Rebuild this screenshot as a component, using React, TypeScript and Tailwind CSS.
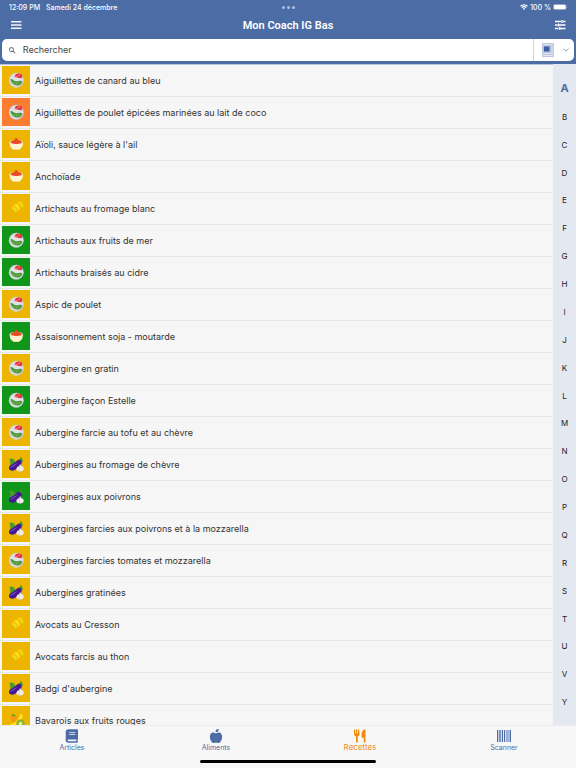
import { useState } from 'react';
import { FaAppleAlt } from 'react-icons/fa';
import { MdSearch } from 'react-icons/md';

type Kind = 'plate' | 'sauce' | 'gratin' | 'aubergine' | 'fruit';
type Level = 'yellow' | 'orange' | 'green';

interface Recipe {
  name: string;
  kind: Kind;
  level: Level;
}

const LEVEL_BG: Record<Level, string> = {
  yellow: 'bg-[#edb500]',
  orange: 'bg-[#fc7c30]',
  green: 'bg-[#109618]',
};

const RECIPES: Recipe[] = [
  { name: 'Aiguillettes de canard au bleu', kind: 'plate', level: 'yellow' },
  { name: 'Aiguillettes de poulet épicées marinées au lait de coco', kind: 'plate', level: 'orange' },
  { name: "Aïoli, sauce légère à l'ail", kind: 'sauce', level: 'yellow' },
  { name: 'Anchoïade', kind: 'sauce', level: 'yellow' },
  { name: 'Artichauts au fromage blanc', kind: 'gratin', level: 'yellow' },
  { name: 'Artichauts aux fruits de mer', kind: 'plate', level: 'green' },
  { name: 'Artichauts braisés au cidre', kind: 'plate', level: 'green' },
  { name: 'Aspic de poulet', kind: 'plate', level: 'yellow' },
  { name: 'Assaisonnement soja - moutarde', kind: 'sauce', level: 'green' },
  { name: 'Aubergine en gratin', kind: 'plate', level: 'yellow' },
  { name: 'Aubergine façon Estelle', kind: 'plate', level: 'green' },
  { name: 'Aubergine farcie au tofu et au chèvre', kind: 'plate', level: 'yellow' },
  { name: 'Aubergines au fromage de chèvre', kind: 'aubergine', level: 'yellow' },
  { name: 'Aubergines aux poivrons', kind: 'aubergine', level: 'green' },
  { name: 'Aubergines farcies aux poivrons et à la mozzarella', kind: 'aubergine', level: 'yellow' },
  { name: 'Aubergines farcies tomates et mozzarella', kind: 'plate', level: 'yellow' },
  { name: 'Aubergines gratinées', kind: 'aubergine', level: 'yellow' },
  { name: 'Avocats au Cresson', kind: 'gratin', level: 'yellow' },
  { name: 'Avocats farcis au thon', kind: 'gratin', level: 'yellow' },
  { name: "Badgi d'aubergine", kind: 'aubergine', level: 'yellow' },
  { name: 'Bavarois aux fruits rouges', kind: 'fruit', level: 'yellow' },
];

const LETTERS = 'ABCDEFGHIJKLMNOPQRSTUVY'.split('');

function KindIcon({ kind }: { kind: Kind }) {
  if (kind === 'plate') {
    return (
      <svg viewBox="0 0 28 28" className="size-7" aria-hidden="true">
        <circle cx="14.300" cy="14.200" r="7.500" fill="#cdd1d8" />
        <circle cx="14.300" cy="14.200" r="6.300" fill="#dfe2e8" />
        <path d="M12.600 10.300c.2-1.600 1.900-2.700 4-2.800 1.800 0 3.300.9 3.700 2.300.3 1.200-.3 2.300-1.400 2.400-1.300.2-2.200-.4-3.300-.5-1.200-.1-2.800-.2-3-1.400z" fill="#e0383c" />
        <path d="M11.700 11.300c1.300-.9 3-.6 4.200 0M16.500 9.300l1.500.1" stroke="#f4aaa4" strokeWidth=".8" fill="none" />
        <path d="M8.600 13.300c1.100-.7 2 .1 3.100 1 1.500 1.100 2.900 1.100 4.700.7 1.300-.3 3.200-.6 3.700.5.4 1.200-.6 2.600-2 3.400-2 1-4.500.9-6.500-.4-1.800-1.200-3.400-3.300-3-5.200z" fill="#4f9b3c" />
        <path d="M9.500 15.600c1.700 2 4.500 2.500 8.500 1.300" stroke="#8cc46c" strokeWidth=".8" fill="none" strokeDasharray="1.500 1" />
      </svg>
    );
  }
  if (kind === 'sauce') {
    return (
      <svg viewBox="0 0 28 28" className="size-7" aria-hidden="true">
        <path d="M7.700 12h13.200c.3 3.600-1 6.300-3.600 7.400l-.5.700h-5l-.5-.7C8.700 18.300 7.400 15.600 7.700 12z" fill="#fff3d0" />
        <path d="M11.300 19.200h6l-.5.900h-5z" fill="#e5d7a8" />
        <ellipse cx="14.300" cy="12.200" rx="6.600" ry="2.300" fill="#f8e8bf" />
        <path d="M8.600 12c.5-1.100 2-1.600 3.600-2.100 1.100-.4.700-1.900 1.900-2.100 1.300.2.900 1.700 2 2.100 1.600.4 3.300 1 3.900 2.100.1 2.600-11.400 2.600-11.400 0z" fill="#e94b27" />
      </svg>
    );
  }
  if (kind === 'gratin') {
    return (
      <svg viewBox="0 0 28 28" className="size-7" aria-hidden="true">
        <path d="M8 15l2.900-2.800c2.300.6 4 2.500 4.200 4.800l-2.300 2.800c-.4-2.500-2-4.400-4.800-4.800z" fill="#f9d70c" />
        <path d="M11.300 11.800l2.600-2.500c2.500.6 4.300 2.500 4.500 5l-2.500 2.900c-.5-2.700-2.100-4.600-4.600-5.400z" fill="#fbdd12" />
        <path d="M14.700 9l2-1.700c2.700.2 4.700 2.300 4.900 4.700l-2.600 2.900c-.4-2.800-1.900-4.900-4.300-5.900z" fill="#f7d409" />
        <path d="M8 15c2.600.3 4.300 1.900 4.900 4.700M14.800 9.100c2.300 1 3.700 3 4.200 5.600" stroke="#cc9d00" strokeWidth=".7" fill="none" />
      </svg>
    );
  }
  if (kind === 'aubergine') {
    return (
      <svg viewBox="0 0 28 28" className="size-7" aria-hidden="true">
        <path d="M7.500 9.200c1.900-1.300 3.900-.6 5 1l1.500 3-5.500 4.300C7.800 15 8.800 12 7.500 9.200z" fill="#4c9a2a" />
        <path d="M16.500 10c1-.5 1.700-1.600 2-2.700l1.500.6-.3 1.500 1.600.8c-.8 1.400-1.900 2.200-3.300 2.300z" fill="#39951f" />
        <path d="M15.800 10c1.800-.6 3.600.3 3.900 2.200.2 2.900-2.200 4.200-4.300 6-2.200 1.900-5.500 3.600-7.700 1.500-1.500-1.800-.5-4 1.500-4.800 3-1.300 4.300-3.500 6.600-4.900z" fill="#451790" />
        <path d="M9.200 17.200c1.700-1.300 3.400-1.500 4.900-3.500" stroke="#9468d2" strokeWidth=".9" fill="none" strokeLinecap="round" />
        <path d="M18.200 13.700l.8 2.300c1.900.4 2.900 1.500 2.700 3.100-.2 1.800-1.800 2.500-3.800 2.500s-3.500-.9-3.500-2.500c0-1.500 1.100-2.500 2.800-3.100z" fill="#f1ebf0" />
        <path d="M18 16.500c-1 1.500-1 3 0 4.700" stroke="#c5b7c5" strokeWidth=".6" fill="none" />
      </svg>
    );
  }
  return (
    <svg viewBox="0 0 28 28" className="size-7" aria-hidden="true">
      <circle cx="12" cy="12.500" r="3.500" fill="#f79a12" />
      <path d="M9.500 9.500l2-.9 1.500 1.400" stroke="#4b9b2e" strokeWidth="1.200" fill="none" />
      <path d="M18.500 7.500l1.500.7c1.500 4.500-1 8.500-5 10.500-3 1.500-6 1.300-7.500 0 5-1.500 9.500-5 11-11.200z" fill="#ffe21c" />
      <circle cx="18.500" cy="17.500" r="4.300" fill="#90b52b" />
      <circle cx="18.500" cy="17.500" r="1.700" fill="#e7edaa" />
    </svg>
  );
}

function StatusBar() {
  return (
    <div className="grid h-3.5 grid-cols-3 items-center pr-2 pl-[9px] font-['Inter',sans-serif] text-[7px] leading-none font-medium">
      <div className="flex gap-1.5">
        <span>12:09 PM</span>
        <span>Samedi 24 décembre</span>
      </div>
      <div className="flex justify-center gap-0.5">
        <span className="size-[3px] rounded-full bg-[#b0bede]" />
        <span className="size-[3px] rounded-full bg-[#b0bede]" />
        <span className="size-[3px] rounded-full bg-[#b0bede]" />
      </div>
      <div className="flex items-center justify-end gap-0.5">
        <svg viewBox="0 0 16 12" className="h-1.5 w-2" aria-hidden="true">
          <path d="M1 4.500a10 10 0 0 1 14 0M3.600 7.200a6.300 6.300 0 0 1 8.800 0" fill="none" stroke="#fff" strokeWidth="2.300" />
          <path d="M5.700 9.300a3.300 3.300 0 0 1 4.600 0L8 11.800z" fill="#fff" />
        </svg>
        <span>100 %</span>
        <svg viewBox="0 0 15 6" className="h-1.5 w-[15px]" aria-hidden="true">
          <rect x="0.300" y="0.300" width="12.900" height="5.400" rx="1.700" fill="none" stroke="#a9b8d8" strokeWidth=".5" />
          <rect x="0.800" y="0.700" width="11.900" height="4.600" rx="1.300" fill="#fff" />
          <path d="M13.700 2v2c.8-.3.800-1.700 0-2z" fill="#a9b8d8" />
        </svg>
      </div>
    </div>
  );
}

function TitleBar() {
  return (
    <div className="flex h-[25px] items-center justify-between px-2.5 pb-[3px]">
      <button type="button" aria-label="Menu">
        <svg viewBox="0 0 12 10" className="h-2.5 w-3" aria-hidden="true">
          <path d="M1 1.800h10.500M1 5h10.500M1 8.200h10.500" stroke="#f2f5fa" strokeWidth="1.400" />
        </svg>
      </button>
      <h1 className="pt-px font-['Roboto',sans-serif] text-[11px] leading-4 font-semibold">Mon Coach IG Bas</h1>
      <button type="button" aria-label="Filtres">
        <svg viewBox="0 0 12 12" className="size-3" aria-hidden="true">
          <path
            d="M1 2.500h6M9 2.500h2.500M1 6h2.500M5 6h6.500M1 9.500h3.500M6.500 9.500h5M8 1v3M4.500 4.500v3M5.800 8v3"
            stroke="#fff"
            strokeWidth="1.300"
          />
        </svg>
      </button>
    </div>
  );
}

function SearchBar({ value, onChange }: { value: string; onChange: (v: string) => void }) {
  return (
    <div className="px-0.5 pb-[3px]">
      <div className="flex h-[22px] overflow-hidden rounded-[5px] bg-white">
        <label className="flex flex-1 items-center gap-1.5 pl-1.5">
          <MdSearch className="size-[9px] text-[#444]" />
          <input
            type="text"
            aria-label="Rechercher"
            placeholder="Rechercher"
            value={value}
            onChange={(e) => onChange(e.target.value)}
            className="w-full bg-transparent font-['Inter',sans-serif] text-[9px] leading-4 text-[#333] outline-none placeholder:text-[#444]"
          />
        </label>
        <div className="relative flex w-[41px] items-center justify-between border-l border-[#c8d2e8] pr-[5px] pl-2">
          <svg viewBox="0 0 12 14" className="h-3.5 w-3" aria-hidden="true">
            <rect width="12" height="14" rx="1" fill="#b9c5df" />
            <path d="M1 1.500h10M1 10.500h10M1 12.500h10M9 4h2.500M9 6h2.500M9 8h2.500" stroke="#eef1f8" strokeWidth=".8" />
            <rect x="2" y="3.500" width="5.500" height="5" fill="#3b5ea5" />
          </svg>
          <svg viewBox="0 0 6 4" className="h-1 w-1.5" aria-hidden="true">
            <path d="M.4.500L3 3.200 5.600.500" fill="none" stroke="#999" strokeWidth="1" />
          </svg>
          <select aria-label="Affichage" className="absolute inset-0 size-full opacity-0">
            <option>Liste</option>
            <option>Vignettes</option>
          </select>
        </div>
      </div>
    </div>
  );
}

function RecipeRow({ recipe }: { recipe: Recipe }) {
  return (
    <li className="border-b border-[#e6e6e6]">
      <a href="#recette" className="flex h-[31px] items-center gap-[5px] pb-px pl-0.5">
        <span className={`size-7 shrink-0 ${LEVEL_BG[recipe.level]}`}>
          <KindIcon kind={recipe.kind} />
        </span>
        <span className="pt-px">{recipe.name}</span>
      </a>
    </li>
  );
}

function LetterIndex({ active, onSelect }: { active: string; onSelect: (l: string) => void }) {
  return (
    <nav aria-label="Index" className="flex w-[23px] flex-col bg-[#e4e8f0] pt-[11px] pb-[9px] font-['Inter',sans-serif]">
      {LETTERS.map((l) => (
        <button
          key={l}
          type="button"
          onClick={() => onSelect(l)}
          className={
            l === active
              ? 'min-h-0 flex-1 text-[11px] leading-none font-bold text-[#4c6ca5]'
              : 'min-h-0 flex-1 text-[8px] leading-none text-[#222]'
          }
        >
          {l}
        </button>
      ))}
    </nav>
  );
}

function BookIcon() {
  return (
    <svg viewBox="0 0 14 14" className="size-3.5" aria-hidden="true">
      <path
        fillRule="evenodd"
        d="M3.200.3h9c.5 0 .8.300.8.800v8.800c0 .4-.2.600-.5.700v1.700c.3.100.5.300.5.700s-.3.700-.8.700h-9C1.800 13.700.7 12.700.7 11.300V2.800C.7 1.400 1.800.3 3.200.3zM3.400 10.600c-1.100 0-1.100 1.600 0 1.600h7.900v-1.600zM4.300 3.200v.9h6v-.9zM4.300 5.200v.9h6v-.9z"
        fill="currentColor"
      />
    </svg>
  );
}

function CutleryIcon() {
  return (
    <svg viewBox="0 0 14 14" className="size-3.5" aria-hidden="true">
      <path
        d="M1 .5h1v4h.8v-4h1.200v4h.8v-4h1.200l.6 4.200c.1 1.400-.7 2.300-1.800 2.600V13c0 .5-.4.800-.9.800s-.9-.3-.9-.8V7.300C1.800 7 .9 6.100 1 4.700z"
        fill="currentColor"
      />
      <path d="M12.500.3V13c0 .5-.4.800-.9.800s-.9-.3-.9-.8V8.800H8.600V5C8.600 2.500 10 .5 12.500.3z" fill="currentColor" />
    </svg>
  );
}

function BarcodeIcon() {
  return (
    <svg viewBox="0 0 14 14" className="size-3.5" aria-hidden="true">
      <path
        d="M0 1h1.300v12H0zM2 1h.7v12H2zM3.300 1h.7v12h-.7zM4.800 1h1.300v12H4.800zM7 1h1.200v12H7zM9.500 1h.7v12h-.7zM10.700 1h.8v12h-.8zM12.600 1H14v12h-1.400z"
        fill="currentColor"
      />
    </svg>
  );
}

function TabBar() {
  return (
    <footer className="h-[43px] shrink-0 border-t border-[#ececec] bg-[#f7f7f7]">
      <nav className="grid h-[34px] grid-cols-4 font-['Inter',sans-serif] text-[7px] leading-[9px] text-[#4c6ca5]">
        <a href="#articles" className="flex flex-col items-center pt-[3px]">
          <BookIcon />
          Articles
        </a>
        <a href="#aliments" className="flex flex-col items-center pt-[3px]">
          <FaAppleAlt className="size-3.5" />
          Aliments
        </a>
        <a href="#recettes" aria-current="page" className="flex flex-col items-center pt-[3px] text-[8px] text-[#f28c0f]">
          <CutleryIcon />
          Recettes
        </a>
        <a href="#scanner" className="flex flex-col items-center pt-[3px]">
          <BarcodeIcon />
          Scanner
        </a>
      </nav>
      <div className="mx-auto h-[3px] w-[176px] rounded-full bg-black" />
    </footer>
  );
}

export default function App() {
  const [query, setQuery] = useState('');
  const [letter, setLetter] = useState('A');

  const visible = RECIPES.filter((r) => r.name.toLowerCase().includes(query.toLowerCase()));

  return (
    <div className="flex h-screen flex-col bg-[#f6f6f6]">
      <header className="shrink-0 bg-[#4c6ca5] text-white">
        <StatusBar />
        <TitleBar />
        <SearchBar value={query} onChange={setQuery} />
      </header>
      <main className="flex min-h-0 flex-1">
        <ul className="flex-1 overflow-hidden border-t border-[#b9c4de] font-['Inter',sans-serif] text-[9px] text-[#333]">
          {visible.map((r) => (
            <RecipeRow key={r.name} recipe={r} />
          ))}
        </ul>
        <LetterIndex active={letter} onSelect={setLetter} />
      </main>
      <TabBar />
    </div>
  );
}
